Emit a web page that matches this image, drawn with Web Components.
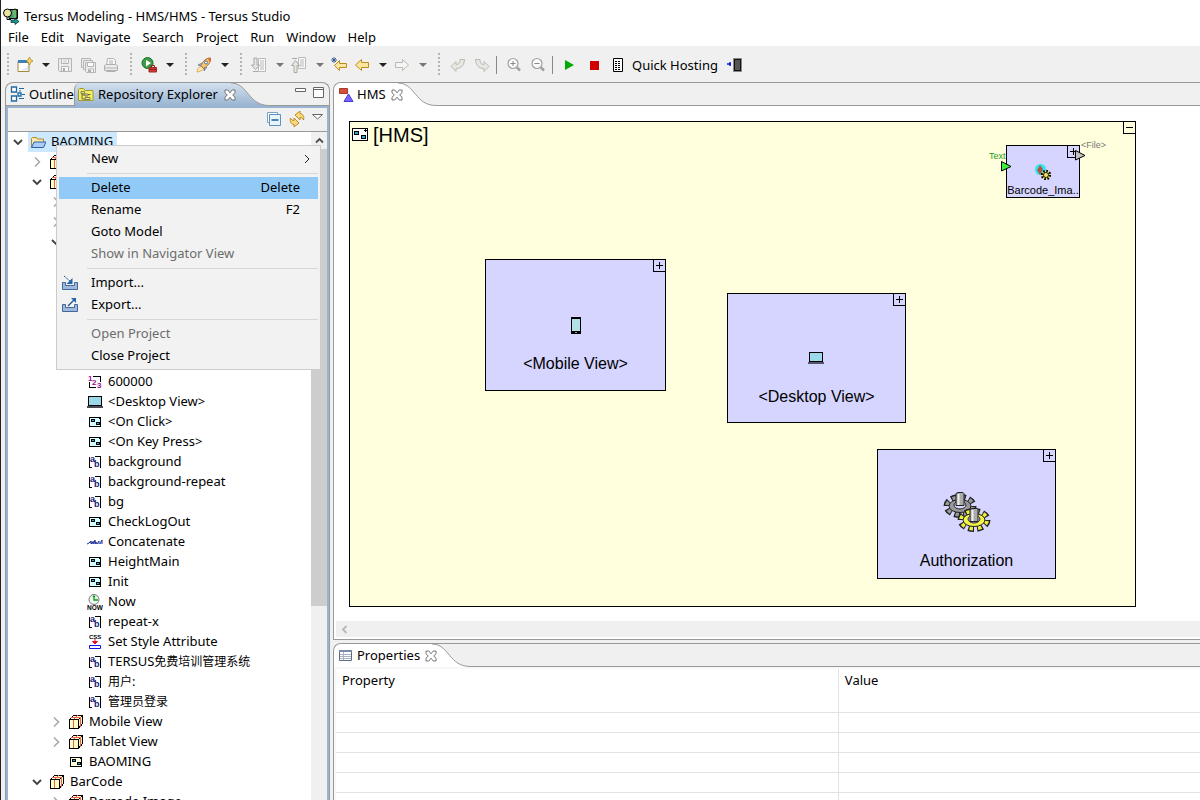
<!DOCTYPE html>
<html lang="en">
<head>
<meta charset="utf-8">
<title>Tersus Modeling - HMS/HMS - Tersus Studio</title>
<style>
html, body { margin: 0; height: 100%; }
body { font: 13px/20px "Noto Sans", "Noto Sans CJK SC", sans-serif; color: #000; background: #f0f0f0; overflow: hidden; }
</style>
</head>
<body>
<ide-app></ide-app>
<script>
const ICONS = {
  app: `<g stroke="#000"><path d="M6 1.500h8.500v9h-8.500z" fill="#3d9e7d"/><path d="M9 2l3-1 2 1v8l-3 1" fill="#6db56d"/><circle cx="4.500" cy="5" r="4" fill="#e8e5a0"/><path d="M4 9v2.500h4" fill="none"/></g><path d="M8 12h4v-2l4 3.500-4 3v-2h-4z" fill="#159a9a" stroke="#000" stroke-width=".6"/>`,
  newwiz: `<path d="M1 4.500h11v10H1z" fill="#fff" stroke="#a48a3a"/><path d="M1.500 4.500h10v9" fill="none" stroke="#b3984d"/><path d="M1 3h10v3H1z" fill="#4080b8"/><path d="M2 13.500C7 13 10 10 11.500 7v6.500z" fill="#dcebf8"/><path d="M12.500 0l1.300 2.700L16 4l-2.200 1.300L12.500 8l-1.300-2.700L9 4l2.200-1.300z" fill="#f6d467" stroke="#ad8115" stroke-width=".7"/>`,
  save: `<g fill="#ececec" stroke="#b5b5b5"><path d="M1.500 1.500h13v13h-12l-1-1z"/><path d="M4.500 1.500h7v5h-7zM4.500 9.500h7v5h-7z" fill="#f8f8f8"/></g><path d="M6 3h4M6 5h4" stroke="#c8c8c8"/><path d="M6 11h2v3H6z" fill="#aaa"/>`,
  saveall: `<g fill="#ececec" stroke="#b5b5b5"><path d="M1.500 1.500h9v9h-9z"/><path d="M3.500 3.500h9v9h-9z"/><path d="M5.500 5.500h10v10h-9l-1-1z"/><path d="M7.500 5.500h6v4h-6zM8.500 12h5v3.500h-5z" fill="#fafafa"/></g><path d="M9 13h2v2H9z" fill="#aaa"/>`,
  print: `<g fill="#ececec" stroke="#b0b0b0"><path d="M3.500 8.500l1-7h6l2 2v5z" fill="#fafafa"/><path d="M1.500 8.500l2-1h9l2 1v5h-13z"/></g><path d="M2 11h12M3.500 14.500h9M6 4h4M6 6h4" stroke="#b0b0b0" fill="none"/>`,
  run: `<circle cx="6.500" cy="6" r="5.500" fill="#3e9c46" stroke="#1e6f2c"/><path d="M5 3l5 3-5 3.500z" fill="#fff"/><path d="M8 10.500h7.500v4.500H8z" fill="#cf3b36" stroke="#a32620"/><path d="M10 10.500v-2h3.500v2M8 12.500h8" fill="none" stroke="#8d211c"/>`,
  rocket: `<path d="M1 15c0-3 2-5 4-6l3 3c-2 1-4 3-7 3z" fill="#fbe8b0" stroke="#d6a53c" stroke-width=".8"/><path d="M5 8.500C7 4 10 1 14.500 1c.5 4-2.500 8-7 10.500z" fill="#f8c968" stroke="#a9662b"/><path d="M11 1.500l3.500-.5v4z" fill="#de6a3c"/><circle cx="10" cy="5.500" r="1.500" fill="#fff" stroke="#4a6ea8"/><path d="M6 6L2 8l3 1M9 10l-1 4 3-4" fill="#93a5c4" stroke="#6a6f8c" stroke-width=".7"/>`,
  nextann: `<path d="M7.500 1.500h7v13h-7z" fill="#fafafa" stroke="#b9b9b9"/><path d="M9 4h4M9 6h4M9 8h4M9 10h4M9 12h4" stroke="#b9b9b9"/><path d="M3 1h3v7h2.500l-4 4.500-4-4.500H3z" fill="#e6e6e2" stroke="#a8a8a4"/><path d="M2 14.500h5" stroke="#aaa"/>`,
  prevann: `<path d="M7.500.500h7v11h-7z" fill="#fafafa" stroke="#b9b9b9"/><path d="M9 3h4M9 5h4M9 7h4M9 9h4" stroke="#b9b9b9"/><path d="M3 15.500h3v-7h2.500l-4-5-4 5H3z" fill="#e6e6e2" stroke="#a8a8a4"/><path d="M1 1.500h5" stroke="#aaa"/>`,
  lastedit: `<path d="M3.500 8.500l5-5v3h7v4h-7v3z" fill="#fbe6a0" stroke="#c08a1c"/><path d="M3 0v6M0 3h6M1 1l4 4M5 1L1 5" stroke="#2c5687" stroke-width=".9"/>`,
  back: `<path d="M1.500 8l6-5.500v3h7v5h-7v3z" fill="#fbe6a0" stroke="#c08a1c"/>`,
  fwd: `<path d="M14.500 8l-6-5.500v3h-7v5h7v3z" fill="#f6f6f2" stroke="#b9b9b5"/>`,
  undo: `<path d="M1 9.500l5-5v3c3 0 4-2 4-5h4.500c0 5-3 9-8.500 9v3z" fill="#e8e8e3" stroke="#bbbbb5"/>`,
  redo: `<path d="M15 9.500l-5-5v3c-3 0-4-2-4-5H1.500c0 5 3 9 8.500 9v3z" fill="#e8e8e3" stroke="#bbbbb5"/>`,
  zoomin: `<circle cx="7" cy="6.500" r="5" fill="#fafafa" stroke="#a0a0a0" stroke-width="1.200"/><path d="M4.500 6.500h5M7 4v5" stroke="#888"/><path d="M11 10.500l3 3" stroke="#a0a0a0" stroke-width="2.500"/>`,
  zoomout: `<circle cx="7" cy="6.500" r="5" fill="#fafafa" stroke="#a0a0a0" stroke-width="1.200"/><path d="M4.500 6.500h5" stroke="#888"/><path d="M11 10.500l3 3" stroke="#a0a0a0" stroke-width="2.500"/>`,
  play: `<path d="M3 3l9 5-9 5z" fill="#0a0"/>`,
  stop: `<path d="M4 4h9v9H4z" fill="#d00000"/>`,
  host: `<path d="M3.500 1.500h9v13h-9z" fill="#fff" stroke="#000"/><path d="M5 4.500h6M5 6.500h6M5 8.500h6M5 10.500h6M5 12.500h6" stroke="#000" stroke-dasharray="2 1"/>`,
  exit: `<path d="M6.500 1.500h8v13h-8z" fill="#111" stroke="#888"/><path d="M8 3h5v10H8z" fill="#555"/><path d="M0 7h4M3 5v4" stroke="#0018e0" stroke-width="1.500"/>`,
  outline: `<g fill="#fff" stroke="#1d6aa5" stroke-width="1.300"><path d="M1.500 1h5v5h-5zM1.500 10h5v5h-5z"/><path d="M8 7h3v3H8z"/></g><path d="M9 2.500h5M12 8.500h3M9 12.500h5M9 5h2" stroke="#1d6aa5" stroke-width="1.200"/>`,
  repo: `<path d="M.500 13.500v-11l1-1h4l1.500 2h8v10z" fill="#f4ee63" stroke="#a09a30"/><path d="M4 5v7h3M4 8h3M9 7.500h3.500" fill="none" stroke="#6b6a3c"/><path d="M3 4.500h3.500v2H3zM7 7h3v2H7zM7 10.500h5v2H7z" fill="#eee9a0" stroke="#6b6a3c" stroke-width=".8"/>`,
  close: `<path d="M1 1h2.800L6 3.800 8.200 1H11v2.800L8.700 6 11 8.200V11H8.200L6 8.200 3.800 11H1V8.200L3.300 6 1 3.800z" fill="#fff" stroke="#666" stroke-width=".9"/>`,
  min: `<path d="M.500 2.500h10v3h-10z" fill="#fff" stroke="#666"/>`,
  max: `<path d="M.500 1.500h10v10h-10zM.500 3.500h10" fill="#fff" stroke="#666"/>`,
  collapse: `<path d="M1.500 1.500h10v10h-10z" fill="#fff" stroke="#76a3c8"/><path d="M3.500 3.500h11v11h-11z" fill="#e8f4fc" stroke="#5e92bd"/><path d="M5.500 9h7" stroke="#1d5c96" stroke-width="1.500"/>`,
  sync: `<g fill="#f8da7c" stroke="#ba7f18" stroke-width=".9"><path d="M6 4l5-4v2.500c3 .5 4.500 3 3.500 6.500-1-2-2-2.500-3.500-2.500V9z"/><path d="M10 12l-5 4v-2.500c-3-.5-4.500-3-3.500-6.500 1 2 2 2.500 3.500 2.500V7z"/></g>`,
  viewmenu: `<path d="M.500 1.500h10L5.500 6z" fill="#fff" stroke="#666"/>`,
  hms: `<path d="M.500 1.500h8v5h-8z" fill="#d34f3e" stroke="#a83a2c"/><path d="M9.500 7L14 14.500H5z" fill="#7b68ff" stroke="#4a35d8"/>`,
  props: `<path d="M.500 2.500h12v10H.500z" fill="#fff" stroke="#5d6b83"/><path d="M0 2h13v2H0z" fill="#7c8aa5"/><path d="M1 6.500h11M1 8.500h11M1 10.500h11M4.500 4v8" stroke="#a8b2c4"/>`,
  folder: `<path d="M1.500 13.500v-9l1-1h4l1 1.500h6v3" fill="#fae9a8" stroke="#b1862c"/><path d="M1.500 13.500L4 8h12l-2.500 5.500z" fill="#a9cdf5" stroke="#2e62a8"/>`,
  pkg: `<g shape-rendering="crispEdges"><path d="M1.500 5.500l4-4h9v8l-4 5h-9z" fill="#ffffc6" stroke="#000"/><path d="M10.500 5.500l4-4v8l-4 5z" fill="#f7f3b0" stroke="#000"/><path d="M5.500 14V5.500l4-4M3 3.500h9.500v9" fill="none" stroke="#f0605a"/><path d="M1.500 5.500h9v9h-9z" fill="none" stroke="#000"/></g>`,
  action: `<g shape-rendering="crispEdges"><path d="M2 3h12v10H2z" fill="#000"/><path d="M3 4h9v1h1v7H3z" fill="#d5ffff"/><path d="M4 5h4v3H4zM9 8h4v3H9z" fill="#000"/><path d="M5 6h2v1H5zM10 9h2v1h-2z" fill="#29a9e0"/></g>`,
  sys: `<g shape-rendering="crispEdges"><path d="M2 3h12v10H2z" fill="#000"/><path d="M3 4h9v1h1v7H3z" fill="#ffffe0"/><path d="M4 5h4v3H4zM9 8h4v3H9z" fill="#000"/><path d="M5 6h2v1H5zM10 9h2v1h-2z" fill="#29a9e0"/></g>`,
  laptop: `<g shape-rendering="crispEdges"><path d="M1 2h14v10H1z" fill="#000"/><path d="M2 3h12v8H2z" fill="#9bd8e8"/><path d="M0 12h16v2H0z" fill="#4a4a52"/></g>`,
  ab: `<path d="M5 13.500H2.500v-11M8 2.500h5.500v11h-1" fill="none" stroke="#000" shape-rendering="crispEdges"/><g fill="#17177a" font-family="Liberation Sans" font-weight="700" font-size="9"><text x="3" y="8">a</text><text x="7" y="13">b</text></g>`,
  num: `<path d="M6 2.500h7.500V8M2.500 8v5.500h6" fill="none" stroke="#000" shape-rendering="crispEdges"/><g fill="#9b0a8b" font-family="Liberation Sans" font-weight="700" font-size="8"><text x="1" y="7">1</text><text x="5" y="11">2</text><text x="10" y="14">3</text></g>`,
  concat: `<path d="M0 10l2-1 2-2v3l2-2v2l2-4v4l1-2 1 2 2-3v3M13 10l2-4v4M3 8h6" fill="none" stroke="#1a2f95"/>`,
  now: `<circle cx="7" cy="5.500" r="5" fill="#eef4ee" stroke="#777"/><path d="M7 2v4h4M6 3l1-1 1 1" fill="none" stroke="#0aa020" stroke-width="1.300"/><text x="0" y="16" font-family="Liberation Sans" font-weight="700" font-size="6.500">NOW</text>`,
  css: `<text x="2" y="5" font-family="Liberation Sans" font-weight="700" font-size="6">CSS</text><path d="M8 5v4M5.500 7.500h5L8 10z" fill="#e8102c" stroke="#e8102c"/><path d="M2.500 11.500h11v3h-11z" fill="#fff" stroke="#1414e8"/>`,
  import: `<path d="M.500 7.500v7h15v-7h-3v3h-9v-3z" fill="#9fb9dc" stroke="#44679b"/><path d="M2 1l7 6" stroke="#1c4f88" stroke-dasharray="2 1"/><path d="M10.500 3v6h-6z" fill="#1f66a8"/>`,
  export: `<path d="M.500 7.500v7h15v-7h-3v3h-9v-3z" fill="#9fb9dc" stroke="#44679b"/><path d="M6 9l6-6" stroke="#1c4f88" stroke-width="1.300"/><path d="M14 1v5L9 1z" fill="#1f66a8"/>`,
  hmsbox: `<g shape-rendering="crispEdges"><path d="M.500 1.500h15v12H.500z" fill="#fff" stroke="#000"/><path d="M2.500 4.500h4v3h-4zM9.500 8.500h4v3h-4z" fill="#29a9e0" stroke="#000"/><path d="M12 3.500h3M13.500 2v3" stroke="#000"/></g>`,
  down: `<path d="M2 4L6 8l4-4" fill="none" stroke="#404040" stroke-width="1.800"/>`,
  right: `<path d="M4 1.500L8.500 6 4 10.500" fill="none" stroke="#a6a6a6" stroke-width="1.500"/>`,
  phone: `<g shape-rendering="crispEdges"><path d="M11 8h10v17H11z" fill="#000"/><path d="M12 10h8v12h-8z" fill="#b4e2e4"/><path d="M15 23h2v1h-2z" fill="#999"/></g>`,
  desk: `<g shape-rendering="crispEdges"><path d="M8 10h14v10H8z" fill="#000"/><path d="M9 11h12v8H9z" fill="#9bd8e8"/><path d="M7 20h16v2H7z" fill="#55556a"/></g>`,
  gears: `<g stroke="#222"><ellipse cx="17" cy="16" rx="13.500" ry="9" fill="none" stroke-width="6" pathLength="16" stroke-dasharray="1.300 .7"/><ellipse cx="17" cy="16" rx="13" ry="8.500" fill="none" stroke="#9a9a9a" stroke-width="4" pathLength="16" stroke-dasharray=".8 1.200" stroke-dashoffset="-.25"/><ellipse cx="17" cy="16" rx="11" ry="6.500" fill="#999"/><ellipse cx="17" cy="15" rx="6" ry="4" fill="#d5d5ff"/><path d="M13 3.500l2-1h5l1 1v12h-8z" fill="#aaa"/><path d="M15.500 4v11" stroke="#eee" stroke-width="2"/><ellipse cx="31" cy="30" rx="13.500" ry="9" fill="none" stroke-width="6" pathLength="16" stroke-dasharray="1.300 .7"/><ellipse cx="31" cy="30" rx="13" ry="8.500" fill="none" stroke="#eeee3c" stroke-width="4" pathLength="16" stroke-dasharray=".8 1.200" stroke-dashoffset="-.25"/><ellipse cx="31" cy="30" rx="11" ry="6.500" fill="#f4f44a"/><ellipse cx="31" cy="29" rx="6" ry="4" fill="#d5d5ff"/><path d="M27 19.500l2-1h5l1 1v12h-8z" fill="#aaa"/><path d="M29.500 20v11" stroke="#eee" stroke-width="2"/></g>`,
  barcode: `<circle cx="5.500" cy="5.500" r="5.500" fill="#2ce6f2"/><path d="M5 1l3 4-3 6-3-5z" fill="#b4563c"/><circle cx="11" cy="11" r="4" fill="#f0e64a" stroke="#000" stroke-width="2.500" stroke-dasharray="1.600 1.500"/><circle cx="11" cy="11" r="2.500" fill="#f0e64a" stroke="#000" stroke-width=".8"/><circle cx="11" cy="10.500" r="1" fill="#ddd"/>`
};

/* <ide-icon name size> : inline SVG glyph on a square grid */
customElements.define('ide-icon', class extends HTMLElement {
  static observedAttributes = ['name', 'size'];
  constructor() {
    super();
    this.attachShadow({ mode: 'open' });
  }
  attributeChangedCallback() {
    const s = this.getAttribute('size') || 16;
    this.shadowRoot.innerHTML = `<style>:host{display:block;flex:none}svg{display:block}</style>
      <svg width="${s}" height="${s}" viewBox="0 0 ${s} ${s}" aria-hidden="true">${ICONS[this.getAttribute('name')] || ''}</svg>`;
  }
});

const define = (name, html, setup) => {
  const tpl = document.createElement('template');
  tpl.innerHTML = html;
  customElements.define(name, class extends HTMLElement {
    connectedCallback() {
      if (this.shadowRoot) return;
      this.attachShadow({ mode: 'open' }).append(tpl.content.cloneNode(true));
      if (setup) setup(this, this.shadowRoot);
    }
  });
};

/* toolbar pieces */
define('tool-button', `<style>
:host{display:block;flex:none}
button{all:unset;box-sizing:border-box;display:flex;align-items:center;gap:6px;height:24px;padding:0 4px 0 3px}
:host([wide]) button{padding:0 4px}
:host([labelled]) button{padding:0 5px 0 4px}
</style><button type="button"><ide-icon></ide-icon><slot></slot></button>`, (el, root) => {
  root.querySelector('ide-icon').setAttribute('name', el.getAttribute('icon'));
  root.querySelector('button').setAttribute('aria-label', el.textContent || el.getAttribute('icon'));
});
define('tool-arrow', `<style>
:host{display:block;flex:none}
button{all:unset;display:flex;width:17px;height:24px;align-items:center;justify-content:center}
i{border:4px solid transparent;border-top-color:#222;border-bottom:0}
:host([dim]) i{border-top-color:#777}
</style><button type="button" aria-label="More"><i></i></button>`);
define('tool-grip', `<style>
:host{display:flex;flex:none;width:15px;height:24px;justify-content:center}
i{width:2px;background:repeating-linear-gradient(#b4b4b4 0 2px,transparent 2px 4px)}
</style><i></i>`);
define('tool-line', `<style>:host{display:block;flex:none;box-sizing:border-box;width:8px;height:18px;padding-left:2px}
i{display:block;width:1px;height:100%;background:#8a8a8a}</style><i></i>`);

define('title-bar', `<style>
:host{display:flex;align-items:center;gap:4px;height:28px;padding:4px 3px 0 2px;box-sizing:border-box;background:#fff}
h1{margin:0;font:inherit}
</style><ide-icon name="app" size="17"></ide-icon><h1><slot></slot></h1>`);
define('menu-bar', `<style>
:host{display:block;background:#fff}
nav{display:flex;gap:12px;height:18px;padding-left:7px}
button{all:unset;line-height:18px}
</style><nav></nav>`, (el, root) => {
  root.querySelector('nav').innerHTML = el.getAttribute('items').split(',').map(t => `<button type="button">${t}</button>`).join('');
});
define('main-toolbar', `<style>
:host{display:flex;align-items:center;height:36px;padding:1px 0 0;box-sizing:border-box}
tool-grip:first-of-type{width:13px}
</style>
<tool-grip></tool-grip><tool-button icon="newwiz"></tool-button><tool-arrow></tool-arrow>
<tool-button icon="save"></tool-button><tool-button icon="saveall"></tool-button><tool-button icon="print"></tool-button>
<tool-grip></tool-grip><tool-button icon="run"></tool-button><tool-arrow></tool-arrow>
<tool-grip></tool-grip><tool-button icon="rocket"></tool-button><tool-arrow></tool-arrow>
<tool-grip></tool-grip><tool-button icon="nextann"></tool-button><tool-arrow dim></tool-arrow>
<tool-button icon="prevann"></tool-button><tool-arrow dim></tool-arrow>
<tool-button icon="lastedit"></tool-button><tool-button icon="back"></tool-button><tool-arrow></tool-arrow>
<tool-button icon="fwd"></tool-button><tool-arrow dim></tool-arrow>
<tool-grip></tool-grip><tool-button wide icon="undo"></tool-button><tool-button wide icon="redo"></tool-button>
<tool-line></tool-line><tool-button wide icon="zoomin"></tool-button><tool-button wide icon="zoomout"></tool-button>
<tool-line></tool-line><tool-button wide icon="play"></tool-button><tool-button wide icon="stop"></tool-button>
<tool-button labelled icon="host">Quick Hosting</tool-button><tool-button wide icon="exit"></tool-button>`);

/* tab with the swooping right edge; [active] joins it to its pane */
define('pane-tab', `<style>
:host{display:flex;flex:none;height:23px;box-sizing:border-box;line-height:22px}
:host(:not([active])){border-bottom:1px solid #999}
button{all:unset;display:flex;align-items:center;gap:2px;padding:0 0 0 5px;white-space:nowrap}
:host(:not([active])) button{padding-left:4px;gap:3px}
.body{display:flex;align-items:center;gap:5px}
.label{height:23px}
:host([active]) .body{background:var(--tabfill,#fff);border-radius:6px 0 0 0}
:host([blue]) .body{border-left:1px solid #999;gap:3px}
:host([blue]) button{padding-left:3px;gap:4px}
.curve{display:block;flex:none;margin-left:-5px}
:host(:not([active])) .x,:host(:not([active])) .curve{display:none}
.body .x{padding:0;position:relative}
</style><div class="body"><button type="button" role="tab"><ide-icon></ide-icon><span class="label"><slot></slot></span></button><button class="x" type="button" aria-label="Close"><ide-icon name="close" size="12"></ide-icon></button></div>
<svg class="curve" width="38" height="23" aria-hidden="true"><defs><linearGradient id="g" x1="0" y1="0" x2="0" y2="1"><stop offset="0" stop-color="#d3e0ee"/><stop offset="1" stop-color="#99b4d1"/></linearGradient></defs><path class="f" d="M0 0C17 0 17 22.500 38 22.500V23H0z" fill="#fff"/><path d="M0 0C17 0 17 22.500 38 22.500" fill="none" stroke="#999"/></svg>`, (el, root) => {
  root.querySelector('ide-icon').setAttribute('name', el.getAttribute('icon'));
  if (el.hasAttribute('blue')) root.querySelector('.f').setAttribute('fill', 'url(#g)');
});

/* folder: tab strip over a bordered pane */
define('pane-folder', `<style>
:host{display:flex;flex-direction:column;min-width:0;min-height:0;box-sizing:border-box;border:1px solid #999;border-radius:8px 8px 0 0;background:#f0f0f0;overflow:hidden}
header{display:flex;flex:none;height:23px}
.fill{flex:1;display:flex;justify-content:flex-end;gap:6px;padding:3px 4px 0 0;border-bottom:1px solid #999;box-sizing:border-box}
.content{flex:1;min-height:0;display:flex;flex-direction:column;background:#fff}
:host([blue]) .content{border:2px solid #99b4d1;border-bottom:0}
:host([open-right]){border-right:0;border-radius:8px 0 0 0}
:host([open-bottom]){border-bottom:0}
:host([soft]) .content{background:#f8f8f8;padding:2px 0 0 2px}
</style><header role="tablist"><slot name="tab"></slot><div class="fill"><slot name="tools"></slot></div></header><div class="content"><slot></slot></div>`);

define('view-toolbar', `<style>
:host{display:flex;flex:none;justify-content:flex-end;gap:7px;height:24px;box-sizing:border-box;padding:3px 3px 0 0;border-bottom:1px solid #999;background:#f0f0f0}
button{all:unset;height:16px}
</style><button type="button" aria-label="Collapse All"><ide-icon name="collapse"></ide-icon></button><button type="button" aria-label="Refresh"><ide-icon name="sync"></ide-icon></button><button type="button" aria-label="View Menu"><ide-icon name="viewmenu" size="12"></ide-icon></button>`);

define('tree-row', `<style>
:host{display:flex;height:20px;align-items:center;padding-left:calc(4px + var(--level,0) * 19px);white-space:nowrap}
.tw{width:12px;flex:none}
.hit{display:flex;align-items:center;gap:5px;padding:0 4px 0 2px;margin-left:4px;height:20px}
.label{height:20px;line-height:18px}
:host([selected]) .hit{background:#cce8ff}
</style><div class="tw"></div><div class="hit"><ide-icon></ide-icon><span class="label"><slot></slot></span></div>`, (el, root) => {
  el.setAttribute('role', 'treeitem');
  el.style.setProperty('--level', el.getAttribute('level'));
  root.querySelector('ide-icon').setAttribute('name', el.getAttribute('icon'));
  const t = el.getAttribute('twisty');
  if (t) root.querySelector('.tw').innerHTML = `<ide-icon name="${t}" size="12"></ide-icon>`;
});
define('repo-tree', `<style>
:host{display:flex;flex:1;min-height:0;background:#fff;overflow:hidden}
.rows{flex:1;min-width:0;overflow:hidden}
.bar{flex:none;width:16px;background:#f0f0f0;display:flex;flex-direction:column}
.up{all:unset;height:17px;display:flex;justify-content:center;align-items:center}
.thumb{flex:none;height:457px;background:#cdcdcd}
.cjk{font-size:12px}
</style><div class="rows" role="tree"></div><div class="bar"><button class="up" type="button" aria-label="Scroll up"><svg width="9" height="7"><path d="M1 5.500L4.500 2 8 5.500" fill="none" stroke="#505050" stroke-width="1.800"/></svg></button><div class="thumb"></div></div>`, (el, root) => {
  const rows = [
    [0,'folder','down','BAOMING',1],[1,'pkg','right',''],[1,'pkg','down',''],[2,'pkg','right',''],[2,'pkg','right',''],[2,'pkg','down',''],
    [3,'action','',''],[3,'action','',''],[3,'action','',''],[3,'action','',''],[3,'action','',''],[3,'action','',''],
    [3,'num','','600000'],[3,'laptop','','&lt;Desktop View&gt;'],[3,'action','','&lt;On Click&gt;'],[3,'action','','&lt;On Key Press&gt;'],
    [3,'ab','','background'],[3,'ab','','background-repeat'],[3,'ab','','bg'],[3,'action','','CheckLogOut'],[3,'concat','','Concatenate'],
    [3,'action','','HeightMain'],[3,'action','','Init'],[3,'now','','Now'],[3,'ab','','repeat-x'],[3,'css','','Set Style Attribute'],
    [3,'ab','','TERSUS<span class="cjk">免费培训管理系统</span>'],[3,'ab','','<span class="cjk">用户</span>:'],[3,'ab','','<span class="cjk">管理员登录</span>'],
    [2,'pkg','right','Mobile View'],[2,'pkg','right','Tablet View'],[2,'sys','','BAOMING'],[1,'pkg','down','BarCode'],[2,'pkg','right','Barcode Image']
  ];
  root.querySelector('.rows').innerHTML = rows.map(([l,i,t,s,sel]) =>
    `<tree-row level="${l}" icon="${i}" twisty="${t}"${sel ? ' selected' : ''}>${s}</tree-row>`).join('');
});

define('context-menu', `<style>
:host{display:block;box-sizing:border-box;width:265px;padding:2px;background:#f2f2f2;border:1px solid #ccc}
button{all:unset;box-sizing:border-box;display:flex;align-items:center;width:100%;height:22px;padding:0 18px 0 3px;white-space:nowrap}
.ic{width:29px;flex:none}
.t{height:22px;line-height:20px}
.k{margin-left:auto}
.sel{background:#91c9f7}
[disabled]{color:#6d6d6d}
hr{border:0;height:1px;margin:3px 0 3px 28px;background:#d7d7d7}
.sub{margin-right:-10px}
.arr{display:block;margin-top:6px}
</style><div role="menu"></div>`, (el, root) => {
  const arrow = `<svg class="arr" width="6" height="10"><path d="M1 1l4 4-4 4" fill="none" stroke="#222"/></svg>`;
  const items = [['New',arrow],0,['Delete','Delete','sel'],['Rename','F2'],['Goto Model'],['Show in Navigator View','','',1],0,
    ['Import...','','',0,'import'],['Export...','','',0,'export'],0,['Open Project','','',1],['Close Project']];
  root.querySelector('div').innerHTML = items.map(i => i ?
    `<button type="button" role="menuitem" class="${i[2]||''}"${i[3]?' disabled':''}><span class="ic">${i[4]?`<ide-icon name="${i[4]}"></ide-icon>`:''}</span><span class="t">${i[0]}</span><span class="t k${i[1]===arrow?' sub':''}">${i[1]||''}</span></button>` : '<hr>').join('');
});

/* diagram node: icon centred, label under it */
define('model-node', `<style>
:host{position:absolute;box-sizing:border-box;border:1px solid #000;background:#d5d5ff;display:grid;grid-template-rows:minmax(0,1fr) auto minmax(0,1fr);justify-items:center;font:16px/20px "Liberation Sans",Arial,sans-serif}
ide-icon{grid-row:2}
.t{grid-row:3;margin-top:13px;white-space:nowrap}
:host([small]){font-size:11px;line-height:14px}
:host([small]) .t{margin-top:3px}
button{all:unset;position:absolute;top:-1px;right:-1px;box-sizing:border-box;width:13px;height:13px;border:1px solid #000}
svg{display:block}
</style><ide-icon></ide-icon><span class="t"><slot></slot></span><button type="button" aria-label="Expand"><svg width="11" height="11"><path d="M2 5.500h7M5.500 2v7" stroke="#000"/></svg></button>`, (el, root) => {
  const i = root.querySelector('ide-icon');
  i.setAttribute('name', el.getAttribute('icon'));
  i.setAttribute('size', el.getAttribute('icon-size'));
});
define('model-canvas', `<style>
:host{position:relative;display:block;flex:1;min-height:0;overflow:hidden;background:#fff;font-family:"Liberation Sans",Arial,sans-serif}
.frame{position:absolute;left:15px;top:15px;width:787px;height:486px;box-sizing:border-box;border:1px solid #000;background:#ffffdd}
.head{display:flex;align-items:center;gap:5px;padding-left:2px;height:26px;font-size:20px;line-height:26px}
.fold{all:unset;position:absolute;top:-1px;right:-1px;box-sizing:border-box;width:13px;height:13px;border:1px solid #000}
.fold svg,.port{display:block}
.m{left:135px;top:137px;width:181px;height:132px}
.d{left:377px;top:171px;width:179px;height:130px}
.a{left:527px;top:327px;width:179px;height:130px}
.b{left:656px;top:23px;width:74px;height:53px}
.port,.lbl{position:absolute}
.lbl{font-size:9px;line-height:12px}
.in{left:651px;top:39px}.out{left:725px;top:28px}
.li{left:639px;top:28px;color:#1a9a1a}.lo{left:731px;top:17px;color:#777}
</style><div class="frame"><div class="head"><ide-icon name="hmsbox"></ide-icon>[HMS]</div>
<button class="fold" type="button" aria-label="Collapse"><svg width="11" height="11"><path d="M2 5.500h7" stroke="#000"/></svg></button>
<model-node class="m" icon="phone" icon-size="32">&lt;Mobile View&gt;</model-node>
<model-node class="d" icon="desk" icon-size="32">&lt;Desktop View&gt;</model-node>
<model-node class="a" icon="gears" icon-size="48">Authorization</model-node>
<span class="lbl li">Text</span>
<model-node small class="b" icon="barcode" icon-size="16">Barcode_Ima..</model-node>
<svg class="port in" width="11" height="11"><path d="M.500.500L10 5.500.500 10z" fill="#3cf03c" stroke="#000"/></svg>
<svg class="port out" width="11" height="11"><path d="M.500.500L10 5.500.500 10z" fill="#c0c0c0" stroke="#000"/></svg>
<span class="lbl lo">&lt;File&gt;</span></div>`);
define('h-scroll', `<style>
:host{display:flex;flex:none;align-items:center;height:16px;margin:0 0 2px 2px;padding-left:5px;background:#f0f0f0}
button{all:unset;display:block}svg{display:block}
</style><button type="button" aria-label="Scroll left"><svg width="7" height="9"><path d="M5.500 1L2 4.500 5.500 8" fill="none" stroke="#b8b8b8" stroke-width="1.800"/></svg></button>`);
define('property-table', `<style>
:host{display:block;flex:1;min-height:0;overflow:hidden;background:#fff}
table{width:100%;border-collapse:separate;border-spacing:0;table-layout:fixed}
th,td{box-sizing:border-box;height:20px;padding:0;border-bottom:1px solid #e3e3e3}
th{height:44px;padding:1px 6px;font-weight:400;text-align:left;vertical-align:top}
th:first-child,td:first-child{width:58.2%;border-right:1px solid #e3e3e3}
</style><table><thead><tr><th scope="col">Property</th><th scope="col">Value</th></tr></thead><tbody></tbody></table>`, (el, root) => {
  root.querySelector('tbody').innerHTML = '<tr><td></td><td></td></tr>'.repeat(5);
});

define('ide-app', `<style>
:host{display:grid;grid-template-rows:auto auto auto minmax(0,1fr);height:100vh;box-sizing:border-box;border-left:1px solid #222}
main{display:grid;grid-template-columns:minmax(240px,325px) minmax(0,1fr);gap:3px;padding-left:4px;min-height:0}
.right{display:grid;grid-template-rows:minmax(0,1fr) 157px;gap:3px;min-width:0;min-height:0}
.repo{--tabfill:linear-gradient(#d3e0ee,#99b4d1)}
context-menu{position:absolute;left:56px;top:145px}
.tb{all:unset;height:12px}
</style>
<title-bar>Tersus Modeling - HMS/HMS - Tersus Studio</title-bar>
<menu-bar items="File,Edit,Navigate,Search,Project,Run,Window,Help"></menu-bar>
<main-toolbar></main-toolbar>
<main>
<pane-folder blue open-bottom>
<pane-tab slot="tab" icon="outline">Outline</pane-tab>
<pane-tab slot="tab" class="repo" active blue icon="repo">Repository Explorer</pane-tab>
<button slot="tools" class="tb" type="button" aria-label="Minimize"><ide-icon name="min" size="12"></ide-icon></button>
<button slot="tools" class="tb" type="button" aria-label="Maximize"><ide-icon name="max" size="12"></ide-icon></button>
<view-toolbar></view-toolbar><repo-tree></repo-tree>
</pane-folder>
<div class="right">
<pane-folder open-right><pane-tab slot="tab" active icon="hms">HMS</pane-tab><model-canvas></model-canvas><h-scroll></h-scroll></pane-folder>
<pane-folder open-right open-bottom soft><pane-tab slot="tab" active icon="props">Properties</pane-tab><property-table></property-table></pane-folder>
</div>
</main>
<context-menu></context-menu>`);
</script>
</body>
</html>
